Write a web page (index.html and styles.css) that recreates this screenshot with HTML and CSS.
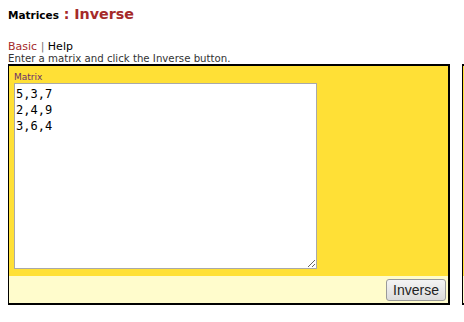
FILE: index.html
```html
<!DOCTYPE html>
<html>
<head>
<meta charset="utf-8">
<link rel="stylesheet" href="styles.css">
</head>
<body>
<div class="page">
  <h1 class="title"><span class="title-main">Matrices</span><span class="title-sep"> : </span><span class="title-sub">Inverse</span></h1>
  <div class="nav"><span class="nav-active">Basic</span> <span class="nav-sep">|</span> <span class="nav-link">Help</span></div>
  <div class="hint">Enter a matrix and click the Inverse button.</div>
  <div class="panels">
    <div class="panel">
      <div class="panel-body">
        <div class="label">Matrix</div>
        <textarea class="matrix">5,3,7
2,4,9
3,6,4</textarea>
      </div>
      <div class="panel-foot">
        <button class="btn">Inverse</button>
      </div>
    </div>
    <div class="panel panel-out">
      <div class="panel-body"></div>
      <div class="panel-foot"></div>
    </div>
  </div>
</div>
</body>
</html>
```
FILE: styles.css
```css
html, body {
  margin: 0;
  padding: 0;
  background: #fff;
  overflow: hidden;
}
.page {
  padding: 8px;
  font-family: "DejaVu Sans", Verdana, sans-serif;
  color: #000;
}
.title {
  margin: 0;
  height: 22px;
  display: flex;
  align-items: baseline;
  font-weight: bold;
  line-height: 12px;
}
.title-main {
  font-size: 10.5px;
}
.title-sep {
  font-size: 14px;
  color: #a52a2a;
  white-space: pre;
}
.title-sub {
  font-size: 14.3px;
  color: #a52a2a;
}
.nav {
  margin-top: 10px;
  font-size: 11px;
  line-height: 13px;
}
.nav-active { color: #a52a2a; }
.nav-sep { color: #777; }
.nav-link { color: #000; }
.hint {
  font-size: 10.2px;
  line-height: 11px;
  color: #333;
}
.panels {
  display: flex;
  gap: 12px;
  width: 900px;
}
.panel {
  width: 439px;
  border: 2px solid #000;
  border-left-width: 1px;
  display: flex;
  flex-direction: column;
}
.panel-body {
  background: #ffe036;
  padding: 5px 5px 6px 5px;
  box-sizing: border-box;
  height: 210px;
}
.label {
  font-size: 9px;
  line-height: 12px;
  color: #6b2f6b;
}
.matrix {
  display: block;
  width: 303px;
  height: 186px;
  box-sizing: border-box;
  margin: 0;
  border: 1px solid #a9a9a9;
  padding: 2px 1px;
  font-family: "DejaVu Sans Mono", monospace;
  font-size: 12px;
  line-height: 16px;
  color: #000;
  background: #fff;
  resize: both;
  outline: none;
}
.panel-foot {
  background: #fffccc;
  height: 27px;
  display: flex;
  justify-content: flex-end;
  align-items: center;
  padding-right: 2px;
}
.btn {
  font-family: "Liberation Sans", Arial, sans-serif;
  font-size: 14px;
  height: 22px;
  padding: 0 6px;
  border: 1px solid #9a9a9a;
  border-radius: 3px;
  background: linear-gradient(#f4f4f4, #dcdcdc);
  color: #222;
}
```
